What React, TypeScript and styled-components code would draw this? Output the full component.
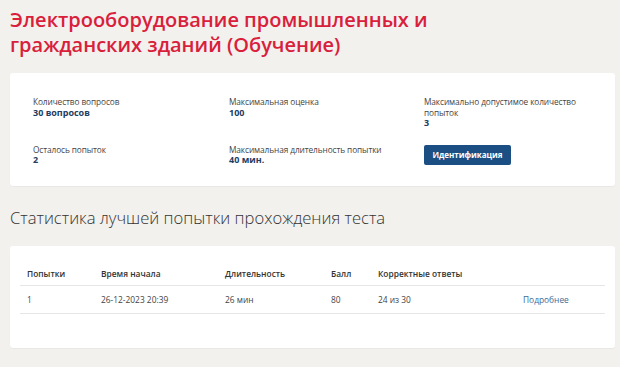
import styled, { createGlobalStyle } from 'styled-components';

const GlobalStyle = createGlobalStyle`
    body {
        margin: 0;
        background: #ffffff;
        font-family: "Open Sans", "Noto Sans", sans-serif;
    }
`;

const Page = styled.main`
    width: 620px;
    height: 367px;
    background: #f2f1ee;
    padding: 7px 10px 0 10px;
    box-sizing: border-box;
`;

const Title = styled.h1`
    margin: 0 0 16px 0;
    font-family: "Open Sans", sans-serif;
    font-weight: 600;
    font-size: 20px;
    line-height: 25px;
    color: #d9203b;
`;

const Card = styled.section<{ $height: number }>`
    background: #ffffff;
    border-radius: 3px;
    height: ${p => p.$height}px;
    width: 605px;
    box-sizing: border-box;
    overflow: hidden;
    box-shadow: 0 1px 1px rgba(0, 0, 0, 0.04);
`;

const InfoGrid = styled.div`
    display: grid;
    grid-template-columns: 196px 195px 1fr;
    row-gap: 16px;
    padding: 24px 20px 0 23px;
`;

const Info = styled.div`
    display: flex;
    flex-direction: column;
`;

const Label = styled.span<{ $narrow?: boolean }>`
    font-size: 8.3px;
    line-height: 10.5px;
    color: #444;
    letter-spacing: -0.1px;
    max-width: ${p => (p.$narrow ? '160px' : 'none')};
`;

const Value = styled.span`
    font-size: 9px;
    line-height: 10.5px;
    font-weight: 700;
    color: #243c60;
`;

const Button = styled.button`
    align-self: flex-start;
    width: 87px;
    height: 20px;
    border: none;
    border-radius: 2px;
    background: #1b4f83;
    color: #fff;
    font-family: "Open Sans", sans-serif;
    font-weight: 700;
    font-size: 8px;
    padding: 0;
`;

const SectionTitle = styled.h2`
    margin: 21px 0 17px 0;
    font-family: "Open Sans", sans-serif;
    font-weight: 300;
    font-size: 16.6px;
    line-height: 22px;
    color: #333;
`;

const Table = styled.table`
    border-collapse: collapse;
    table-layout: fixed;
    margin: 16px 0 0 10px;
    width: 585px;
    font-size: 8.4px;
    color: #444;
`;

const Th = styled.th<{ $w?: number }>`
    text-align: left;
    font-weight: 600;
    color: #333;
    padding: 0 0 0 7px;
    height: 23px;
    width: ${p => (p.$w ? `${p.$w - 7}px` : 'auto')};
    border-bottom: 1px solid #e6e6e6;
`;

const Td = styled.td`
    padding: 0 0 0 7px;
    height: 27px;
    border-bottom: 1px solid #e6e6e6;
`;

const More = styled.a`
    color: #3d6b99;
    text-decoration: none;
`;

const info = [
    { label: 'Количество вопросов', value: '30 вопросов' },
    { label: 'Максимальная оценка', value: '100' },
    { label: 'Максимально допустимое количество попыток', value: '3', narrow: true },
    { label: 'Осталось попыток', value: '2' },
    { label: 'Максимальная длительность попытки', value: '40 мин.' },
];

export default function App() {
    return (
        <>
            <GlobalStyle />
            <Page>
                <Title>Электрооборудование промышленных и<br />гражданских зданий (Обучение)</Title>
                <Card $height={113}>
                    <InfoGrid>
                        {info.map(i => (
                            <Info key={i.label}>
                                <Label $narrow={i.narrow}>{i.label}</Label>
                                <Value>{i.value}</Value>
                            </Info>
                        ))}
                        <Button>Идентификация</Button>
                    </InfoGrid>
                </Card>
                <SectionTitle>Статистика лучшей попытки прохождения теста</SectionTitle>
                <Card $height={102}>
                    <Table>
                        <thead>
                            <tr>
                                <Th $w={74}>Попытки</Th>
                                <Th $w={124}>Время начала</Th>
                                <Th $w={106}>Длительность</Th>
                                <Th $w={47}>Балл</Th>
                                <Th $w={145}>Корректные ответы</Th>
                                <Th></Th>
                            </tr>
                        </thead>
                        <tbody>
                            <tr>
                                <Td>1</Td>
                                <Td>26-12-2023 20:39</Td>
                                <Td>26 мин</Td>
                                <Td>80</Td>
                                <Td>24 из 30</Td>
                                <Td><More href="#">Подробнее</More></Td>
                            </tr>
                        </tbody>
                    </Table>
                </Card>
            </Page>
        </>
    );
}
